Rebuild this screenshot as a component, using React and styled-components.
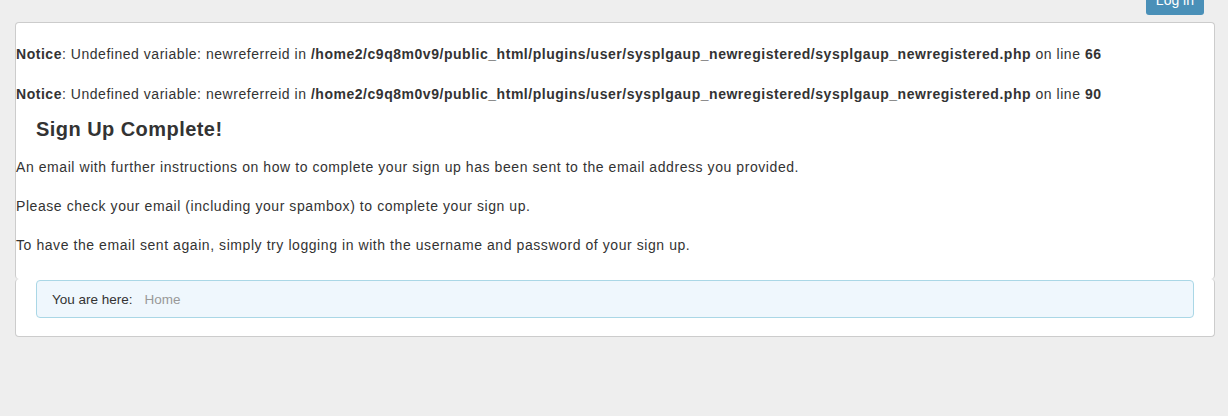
import React from 'react';
import styled, { createGlobalStyle } from 'styled-components';

const GlobalStyle = createGlobalStyle`
  html, body {
    margin: 0;
    padding: 0;
    background: #eeeeee;
    font-family: "Liberation Sans", Arial, Helvetica, sans-serif;
    color: #333333;
  }
`;

const Page = styled.div`
  padding: 0 14px 0 15px;
`;

const TopBar = styled.div`
  display: flex;
  justify-content: flex-end;
  height: 22px;
  padding-right: 10px;
`;

const LoginButton = styled.button`
  margin-top: -14px;
  height: 29px;
  padding: 0 10px;
  border: none;
  border-radius: 0 0 3px 3px;
  background: #4a90b8;
  color: #ffffff;
  font-family: inherit;
  font-size: 14px;
  line-height: 29px;
  cursor: pointer;
`;

const Panel = styled.div`
  width: 1200px;
  box-sizing: border-box;
`;

const Content = styled.div`
  background: #ffffff;
  border: 1px solid #cccccc;
  border-bottom: none;
  border-radius: 4px;
  min-height: 256px;
  font-size: 14px;
  line-height: 18px;
`;

const Notice = styled.div`
  padding-top: 22px;
  margin-bottom: 4px;
  letter-spacing: 0.53px;

  & + & {
    padding-top: 18px;
  }
`;

const Heading = styled.h2`
  margin: 14px 0 0 20px;
  font-size: 20px;
  line-height: 24px;
  font-weight: bold;
  letter-spacing: 0.45px;
`;

const Para = styled.p`
  margin: ${(p) => (p.first ? '16px' : '19px')} 0 0 0;
  font-size: 14px;
  line-height: 20px;
  letter-spacing: 0.57px;
`;

const Footer = styled.div`
  background: #ffffff;
  border: 1px solid #cccccc;
  border-top: none;
  border-radius: 4px;
  padding: 1px 20px 18px 20px;
`;

const Breadcrumb = styled.div`
  display: flex;
  align-items: center;
  gap: 12px;
  height: 36px;
  padding: 0 15px;
  background: #eff7fd;
  border: 1px solid #aad7e6;
  border-radius: 4px;
  font-size: 13.5px;
`;

const Here = styled.span`
  color: #333333;
`;

const Crumb = styled.span`
  color: #999999;
`;

const App = () => {
  return (
    <>
      <GlobalStyle />
      <Page>
        <TopBar>
          <LoginButton>Log in</LoginButton>
        </TopBar>
        <Panel>
          <Content>
            <Notice>
              <b>Notice</b>: Undefined variable: newreferreid in{' '}
              <b>/home2/c9q8m0v9/public_html/plugins/user/sysplgaup_newregistered/sysplgaup_newregistered.php</b>{' '}
              on line <b>66</b>
            </Notice>
            <Notice>
              <b>Notice</b>: Undefined variable: newreferreid in{' '}
              <b>/home2/c9q8m0v9/public_html/plugins/user/sysplgaup_newregistered/sysplgaup_newregistered.php</b>{' '}
              on line <b>90</b>
            </Notice>
            <Heading>Sign Up Complete!</Heading>
            <Para first>
              An email with further instructions on how to complete your sign up has been sent to the email address you provided.
            </Para>
            <Para>Please check your email (including your spambox) to complete your sign up.</Para>
            <Para>To have the email sent again, simply try logging in with the username and password of your sign up.</Para>
          </Content>
          <Footer>
            <Breadcrumb>
              <Here>You are here:</Here>
              <Crumb>Home</Crumb>
            </Breadcrumb>
          </Footer>
        </Panel>
      </Page>
    </>
  );
};

export default App;
